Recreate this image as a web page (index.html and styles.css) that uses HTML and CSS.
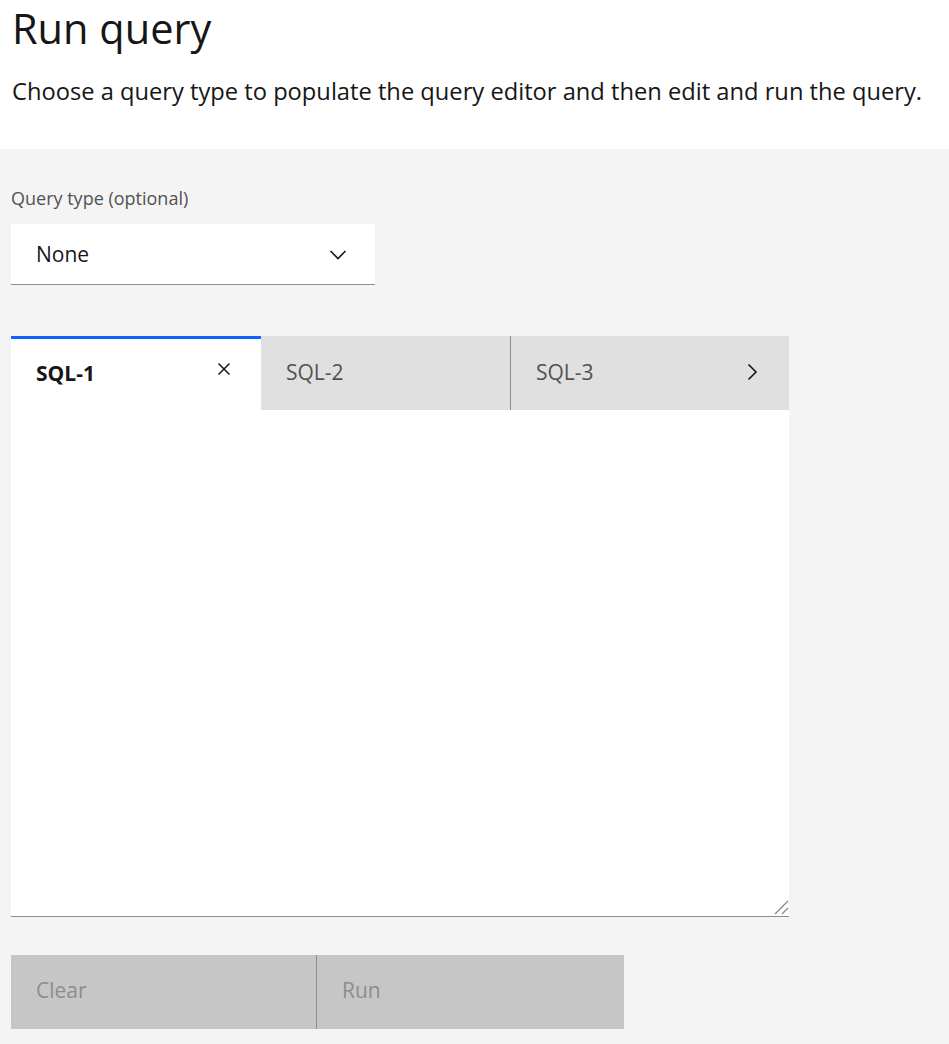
FILE: index.html
```html
<!DOCTYPE html>
<html>
<head>
<meta charset="utf-8">
<link rel="stylesheet" href="styles.css">
</head>
<body>
<header class="intro">
  <h1 class="title">Run query</h1>
  <p class="desc">Choose a query type to populate the query editor and then edit and run the query.</p>
</header>
<main class="panel">
  <label class="field-label">Query type (optional)</label>
  <div class="select">
    <span class="select-value">None</span>
    <svg class="chev-down" width="18" height="12" viewBox="0 0 18 12"><path d="M1.5 2 L9 9.5 L16.5 2" fill="none" stroke="#161616" stroke-width="1.6"/></svg>
  </div>
  <div class="editor">
    <div class="tabs">
      <div class="tab active"><span>SQL-1</span>
        <svg class="close" width="14" height="14" viewBox="0 0 14 14"><path d="M1.5 1.5 L12.5 12.5 M12.5 1.5 L1.5 12.5" stroke="#161616" stroke-width="1.5"/></svg>
      </div>
      <div class="tab"><span>SQL-2</span></div>
      <div class="tab last"><span>SQL-3</span>
        <svg class="chev-right" width="12" height="18" viewBox="0 0 12 18"><path d="M2.5 1.5 L10 9 L2.5 16.5" fill="none" stroke="#161616" stroke-width="1.6"/></svg>
      </div>
    </div>
    <div class="textarea">
      <svg class="grip" width="16" height="16" viewBox="0 0 16 16"><path d="M15 2 L2 15 M15 9 L9 15" stroke="#8d8d8d" stroke-width="1.4"/></svg>
    </div>
  </div>
  <div class="buttons">
    <div class="btn">Clear</div>
    <div class="btn">Run</div>
  </div>
</main>
</body>
</html>
```
FILE: styles.css
```css
html, body { margin: 0; padding: 0; }
body {
  font-family: "Open Sans", "Liberation Sans", sans-serif;
  color: #161616;
  background: #f4f4f4;
  width: 949px;
  height: 1044px;
  overflow: hidden;
}
.intro {
  background: #ffffff;
  padding: 0 12px;
  height: 149px;
  box-sizing: border-box;
  display: flow-root;
}
.title {
  margin: 0;
  font-size: 41.5px;
  font-weight: 400;
  line-height: normal;
}
.desc {
  margin: 19px 0 0 0;
  font-size: 23.7px;
  line-height: 32px;
}
.panel {
  padding: 37px 11px 0 11px;
}
.field-label {
  display: block;
  font-size: 18px;
  color: #525252;
  line-height: 24px;
}
.select {
  margin-top: 14px;
  width: 364px;
  height: 61px;
  background: #fff;
  border-bottom: 1px solid #8d8d8d;
  display: flex;
  align-items: center;
  justify-content: space-between;
  padding: 0 28px 0 25px;
  box-sizing: border-box;
}
.select-value { font-size: 21px; }
.chev-down { margin-top: 1px; }
.editor {
  margin-top: 51px;
  width: 778px;
}
.tabs {
  display: flex;
  height: 74px;
}
.tab {
  flex: 0 0 250px;
  background: #e0e0e0;
  display: flex;
  align-items: center;
  justify-content: space-between;
  box-sizing: border-box;
  padding: 0 26px 2px 25px;
  font-size: 21px;
  color: #525252;
}
.tab:nth-child(2) { flex-basis: 249px; }
.tab.last {
  flex: 1 1 auto;
  padding-right: 31px;
  border-left: 1px solid #8d8d8d;
}
.tab.active {
  background: #fff;
  color: #161616;
  font-weight: 700;
  border-top: 3px solid #0f62fe;
  padding-right: 30px;
  padding-bottom: 4px;
}
.close { margin-top: -8px; }
.textarea {
  background: #fff;
  height: 506px;
  border-bottom: 1px solid #8d8d8d;
  position: relative;
}
.grip { position: absolute; right: 0; bottom: 1px; }
.buttons {
  margin-top: 38px;
  display: flex;
  width: 613px;
}
.btn {
  flex: 0 0 305px;
  height: 74px;
  background: #c6c6c6;
  color: #8d8d8d;
  font-size: 21px;
  display: flex;
  align-items: center;
  padding: 0 0 4px 25px;
  box-sizing: border-box;
}
.btn + .btn { flex: 1 1 auto; border-left: 1px solid #8d8d8d; }
```
